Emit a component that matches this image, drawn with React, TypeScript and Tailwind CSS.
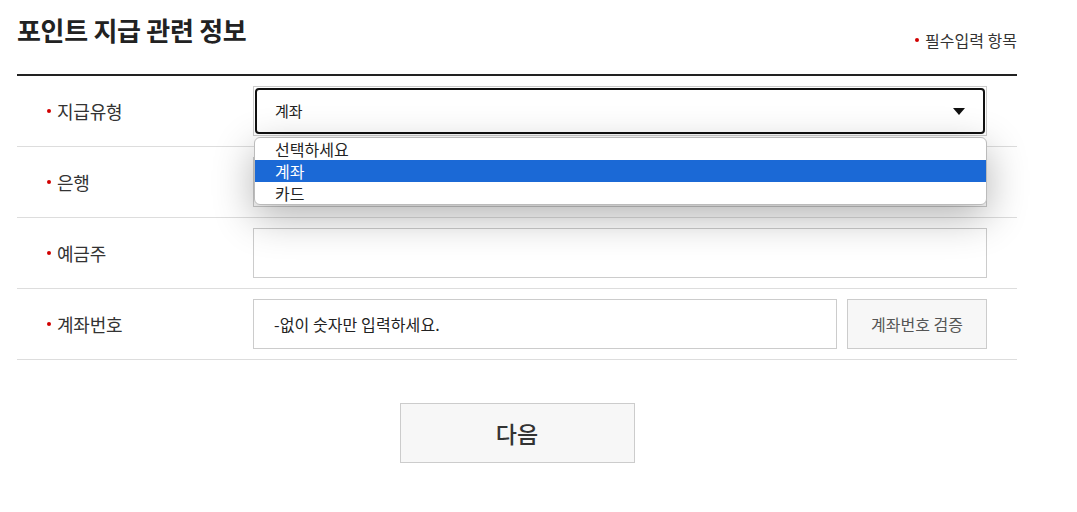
import React from "react";

const font = { fontFamily: '"Noto Sans CJK KR", "Noto Sans", sans-serif' };

function Label({ text }: { text: string }) {
  return (
    <div className="w-[236px] shrink-0 flex items-center pl-[30px] text-[18px] text-[#333] tracking-[-0.2px]">
      <span className="w-[4px] h-[4px] rounded-full bg-[#d10000] mr-[6px]" />
      {text}
    </div>
  );
}

export default function App() {
  return (
    <div className="bg-white w-[1077px] h-[512px]" style={font}>
      <div className="ml-[17px] w-[1000px]">
        <div className="h-[74px] flex justify-between items-start border-b-2 border-[#222] box-content">
          <h1 className="mt-[12px] text-[26px] font-bold text-[#222] tracking-[-0.3px] leading-[36px]">포인트 지급 관련 정보</h1>
          <div className="mt-[28px] flex items-center text-[16px] text-[#333] tracking-[0px]">
            <span className="w-[4px] h-[4px] rounded-full bg-[#d10000] mr-[6px]" />
            필수입력 항목
          </div>
        </div>

        <div className="h-[70px] flex items-center border-b border-[#ddd] box-content">
          <Label text="지급유형" />
          <div className="relative w-[734px] h-[50px] border border-[#ccc]">
            <div className="absolute inset-[1px] border-[2px] border-[#111] rounded-[4px] flex items-center pl-[18px] pr-[18px] justify-between">
              <span className="text-[15px] text-[#222]">계좌</span>
              <svg width="12" height="7" viewBox="0 0 12 7"><path d="M0 0h12L6 7z" fill="#111" /></svg>
            </div>
            <div className="absolute z-10 left-0 top-[50px] w-[733px] bg-white border border-[#bbb] rounded-[6px] overflow-hidden shadow-[0_12px_40px_rgba(0,0,0,0.3)] text-[16px] leading-[22px]">
              <div className="pl-[20px] text-[#222] h-[22px]">선택하세요</div>
              <div className="pl-[20px] text-white bg-[#1b69d6] h-[22px]">계좌</div>
              <div className="pl-[20px] text-[#222] h-[22px]">카드</div>
            </div>
          </div>
        </div>

        <div className="h-[70px] flex items-center border-b border-[#ddd] box-content">
          <Label text="은행" />
          <div className="w-[734px] h-[50px] border border-[#ccc]" />
        </div>

        <div className="h-[70px] flex items-center border-b border-[#ddd] box-content">
          <Label text="예금주" />
          <div className="w-[734px] h-[50px] border border-[#ccc]" />
        </div>

        <div className="h-[70px] flex items-center border-b border-[#ddd] box-content">
          <Label text="계좌번호" />
          <div className="w-[584px] h-[50px] border border-[#ccc] flex items-center pl-[20px] text-[16px] text-[#222] tracking-[0.1px]">
            -없이 숫자만 입력하세요.
          </div>
          <div className="ml-[10px] w-[140px] h-[50px] border border-[#ccc] bg-[#f7f7f7] flex items-center justify-center text-[16px] text-[#555]">
            계좌번호 검증
          </div>
        </div>

        <div className="flex justify-center mt-[43px]">
          <div className="w-[235px] h-[60px] border border-[#ccc] bg-[#f7f7f7] flex items-center justify-center text-[23px] font-medium text-[#333]">
            다음
          </div>
        </div>
      </div>
    </div>
  );
}
